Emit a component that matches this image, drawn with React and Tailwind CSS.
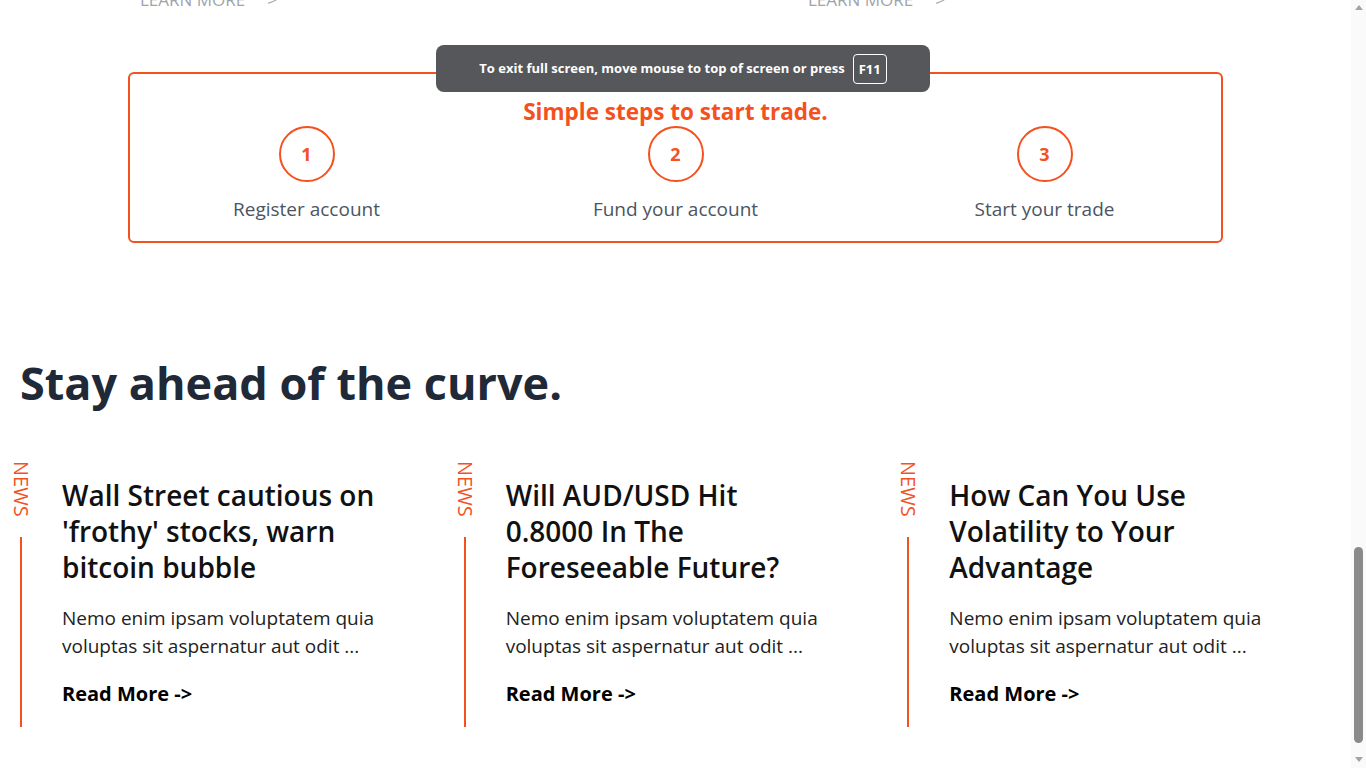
import React from 'react';

const steps = [
  { n: 1, label: 'Register account' },
  { n: 2, label: 'Fund your account' },
  { n: 3, label: 'Start your trade' },
];

const news = [
  { title: "Wall Street cautious on 'frothy' stocks, warn bitcoin bubble" },
  { title: 'Will AUD/USD Hit 0.8000 In The Foreseeable Future?' },
  { title: 'How Can You Use Volatility to Your Advantage' },
];

function StepItem({ n, label }) {
  return (
    <div className="flex flex-col items-center">
      <div className="flex h-[56px] w-[56px] items-center justify-center rounded-full border-2 border-[#f4511e] text-[18px] font-bold text-[#f4511e]">
        {n}
      </div>
      <p className="mt-[13px] text-[19px] leading-[28px] text-[#4b5563]">{label}</p>
    </div>
  );
}

function NewsCard({ title }) {
  return (
    <div className="flex pl-[11px]">
      <div className="flex w-[20px] flex-col items-center pt-[12px]">
        <span className="text-[20px] leading-[20px] text-[#f4511e] [writing-mode:vertical-rl]">NEWS</span>
        <div className="mt-[20px] h-[190px] w-[2px] bg-[#f4511e]" />
      </div>
      <div className="ml-[31px] w-[318px] pt-[28px]">
        <h3 className="text-[28px] font-semibold leading-[36px] text-[#111]">{title}</h3>
        <p className="mt-[19px] text-[19px] leading-[28px] text-[#222]">
          Nemo enim ipsam voluptatem quia voluptas sit aspernatur aut odit ...
        </p>
        <a className="mt-[20px] block text-[20px] font-bold leading-[28px] text-black">Read More -&gt;</a>
      </div>
    </div>
  );
}

export default function App() {
  return (
    <div className="relative flex h-[768px] overflow-hidden bg-white font-['Open_Sans','Noto_Sans',sans-serif]">
      <div className="flex-1">
        <div className="-mt-[9px] flex h-[17px] text-[17px] leading-[17px] text-[#a0a4ab]">
          <span className="ml-[140px] w-[668px]">LEARN MORE<span className="ml-[22px]">&gt;</span></span>
          <span>LEARN MORE<span className="ml-[22px]">&gt;</span></span>
        </div>

        <div className="mx-[128px] mt-[64px] rounded-md border-2 border-[#f4511e] pb-[18px] pt-[24px]">
          <h2 className="text-center text-[22.5px] font-bold leading-[28px] text-[#f4511e]">Simple steps to start trade.</h2>
          <div className="-mx-[8px] grid grid-cols-3">
            {steps.map((s) => (
              <StepItem key={s.n} {...s} />
            ))}
          </div>
        </div>

        <h1 className="ml-[20px] mt-[114px] text-[45px] font-bold leading-[52px] text-[#1f2937]">Stay ahead of the curve.</h1>

        <div className="mt-[40px] grid w-[1331px] grid-cols-3">
          {news.map((n) => (
            <NewsCard key={n.title} {...n} />
          ))}
        </div>
      </div>

      <div className="flex w-[15px] flex-col items-center bg-[#fafafa]">
        <span className="mt-[5px] h-0 w-0 border-x-[4px] border-b-[5px] border-x-transparent border-b-[#a3a3a3]" />
        <div className="flex-1" />
        <div className="mb-[14px] h-[196px] w-[9px] rounded-full bg-[#8a8a8a]" />
        <span className="mb-[6px] h-0 w-0 border-x-[4px] border-t-[5px] border-x-transparent border-t-[#a3a3a3]" />
      </div>

      <div className="absolute left-[436px] top-[45px] flex h-[47px] w-[494px] items-center justify-center rounded-lg bg-[#55575b]">
        <span className="text-[13px] font-bold text-white">To exit full screen, move mouse to top of screen or press</span>
        <span className="ml-[8px] rounded border border-white px-[5px] py-[4px] text-[13px] font-bold leading-[20px] text-white">F11</span>
      </div>
    </div>
  );
}
